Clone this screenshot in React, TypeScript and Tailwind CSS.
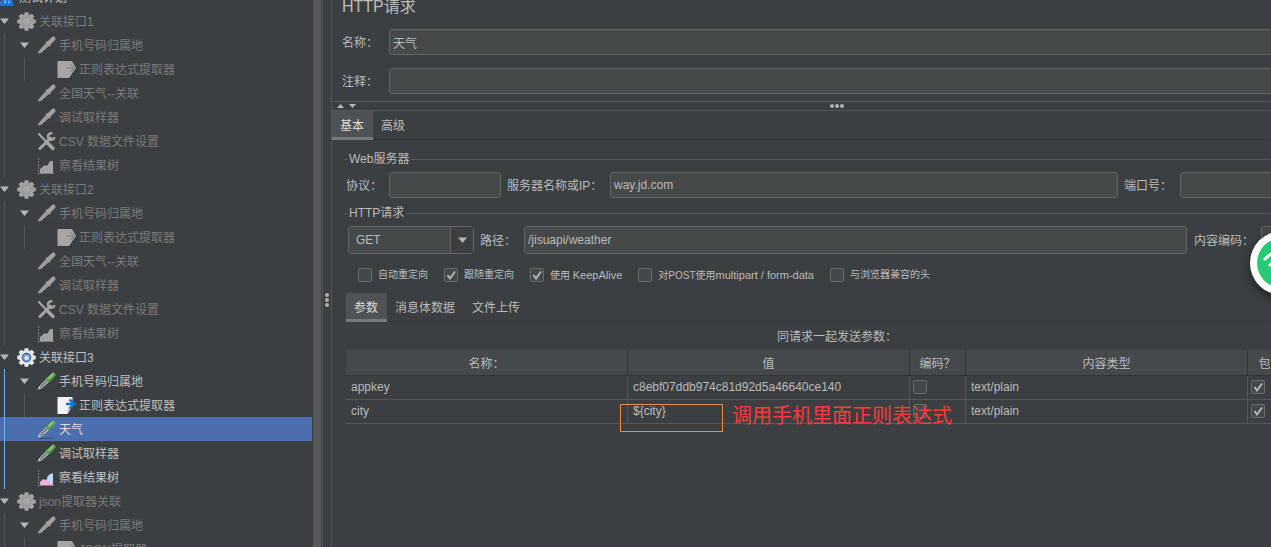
import React, { useState } from "react";

type IconKind = "plan" | "gear" | "dropper" | "extract" | "tools" | "chart";

interface TreeNode {
  id: number;
  label: string;
  icon: IconKind;
  level: number;
  open?: boolean;
  enabled?: boolean;
  activeGroup?: boolean;
}

const nodes: TreeNode[] = [
  { id: 0, label: "测试计划", icon: "plan", level: -1, enabled: true },
  { id: 1, label: "关联接口1", icon: "gear", level: 0, open: true },
  { id: 2, label: "手机号码归属地", icon: "dropper", level: 1, open: true },
  { id: 3, label: "正则表达式提取器", icon: "extract", level: 2 },
  { id: 4, label: "全国天气--关联", icon: "dropper", level: 1 },
  { id: 5, label: "调试取样器", icon: "dropper", level: 1 },
  { id: 6, label: "CSV 数据文件设置", icon: "tools", level: 1 },
  { id: 7, label: "察看结果树", icon: "chart", level: 1 },
  { id: 8, label: "关联接口2", icon: "gear", level: 0, open: true },
  { id: 9, label: "手机号码归属地", icon: "dropper", level: 1, open: true },
  { id: 10, label: "正则表达式提取器", icon: "extract", level: 2 },
  { id: 11, label: "全国天气--关联", icon: "dropper", level: 1 },
  { id: 12, label: "调试取样器", icon: "dropper", level: 1 },
  { id: 13, label: "CSV 数据文件设置", icon: "tools", level: 1 },
  { id: 14, label: "察看结果树", icon: "chart", level: 1 },
  { id: 15, label: "关联接口3", icon: "gear", level: 0, open: true, enabled: true },
  { id: 16, label: "手机号码归属地", icon: "dropper", level: 1, open: true, enabled: true, activeGroup: true },
  { id: 17, label: "正则表达式提取器", icon: "extract", level: 2, enabled: true, activeGroup: true },
  { id: 18, label: "天气", icon: "dropper", level: 1, enabled: true, activeGroup: true },
  { id: 19, label: "调试取样器", icon: "dropper", level: 1, enabled: true, activeGroup: true },
  { id: 20, label: "察看结果树", icon: "chart", level: 1, enabled: true, activeGroup: true },
  { id: 21, label: "json提取器关联", icon: "gear", level: 0, open: true },
  { id: 22, label: "手机号码归属地", icon: "dropper", level: 1, open: true },
  { id: 23, label: "JSON提取器", icon: "extract", level: 2 },
];

const teeth = [0, 45, 90, 135, 180, 225, 270, 315];

function NodeIcon({ kind, on }: { kind: IconKind; on: boolean }) {
  return (
    <svg viewBox="0 0 19 19" className="h-[19px] w-[19px] shrink-0" aria-hidden="true">
      {kind === "plan" && (
        <>
          <path d="M7 0h5v7l4 8q1 3-2 3H5q-3 0-2-3l4-8z" fill="#a9cdf4" />
          <path d="M6 9h7l3 6q1 3-2 3H5q-3 0-2-3z" fill="#1673e0" />
          <path d="M8.500 10l-1.500 5h2zM12 12l1 3h-2z" fill="#b5dbff" />
        </>
      )}
      {kind === "gear" && (
        <>
          {teeth.map((a) => (
            <path
              key={a}
              d="M7 3.500L7.700 .2h3.600l.7 3.300z"
              fill={on ? "#e6e8ea" : "#a2a2a2"}
              transform={`rotate(${a} 9.5 9.5)`}
            />
          ))}
          <circle cx="9.500" cy="9.500" r="7.200" fill={on ? "#e6e8ea" : "#a2a2a2"} />
          <circle cx="9.500" cy="9.500" r="4.700" fill={on ? "#315c9c" : "#919191"} />
          <circle cx="9.500" cy="9.500" r="3.600" fill={on ? "#7fa6d6" : "#aaaaaa"} />
          <circle cx="9.500" cy="10" r="2" fill={on ? "#e8eef6" : "#a2a2a2"} />
        </>
      )}
      {kind === "dropper" && (
        <>
          <path d="M2 18.500h14" stroke="#2b2d2e" strokeOpacity=".5" />
          <path d="M.5 17.800L2 14.500l7.500-8 3 3-8 7z" fill={on ? "#c3c6c8" : "#9e9e9e"} />
          {on && <path d="M3.500 15.500l6.500-7" stroke="#5c6163" strokeWidth="1.200" />}
          <path d="M9 5.800l4.200 4.200" stroke={on ? "#3f7a34" : "#9a9a9a"} strokeWidth="2" />
          <path
            d="M11.500 7.500L16.300 2.700"
            stroke={on ? "#64a550" : "#9f9f9f"}
            strokeWidth="4.400"
            strokeLinecap="round"
          />
          {on && <path d="M11.500 6.300l4.300-4.300" stroke="#a5d694" strokeWidth="1.200" />}
        </>
      )}
      {kind === "extract" && (
        <>
          <path d="M2 18.500h13" stroke="#2b2d2e" strokeOpacity=".5" />
          {on ? (
            <>
              <path d="M.5 1h15v9l-5 8H.5z" fill="#f2f3f4" />
              <path d="M15.500 10l-5 8v-5q3-.5 5-3z" fill="#b9bdc0" />
              <path
                d="M9 8h8.500M12.500 3.500L17.500 8l-5 4.500"
                fill="none"
                stroke="#1474d4"
                strokeWidth="2.400"
              />
            </>
          ) : (
            <>
              <path d="M.5 1h14.500L19 8l-7 10H.5z" fill="#a6a6a6" />
              <path
                d="M9.500 8h8M13 4l4.500 4-4.500 4"
                fill="none"
                stroke="#8c8c8c"
                strokeWidth="1.600"
              />
            </>
          )}
        </>
      )}
      {kind === "tools" && (
        <>
          <path d="M2 2l7 7.500" stroke="#a6a6a6" strokeWidth="2" strokeLinecap="round" />
          <path d="M10.500 11l5.500 5.500" stroke="#a6a6a6" strokeWidth="3.400" strokeLinecap="round" />
          <path d="M3 16.500L13.500 6" stroke="#a6a6a6" strokeWidth="3" strokeLinecap="round" />
          <path
            d="M15.500 1.500a3.300 3.300 0 1 0 2 3.500"
            fill="none"
            stroke="#a6a6a6"
            strokeWidth="2.400"
          />
        </>
      )}
      {kind === "chart" && (
        <>
          <path d="M1.500 2v16" fill="none" stroke="#7d8082" strokeDasharray="2 1" />
          <path d="M1 17.500h16" fill="none" stroke="#7d8082" />
          {on ? (
            <>
              <path d="M3 17v-3l3-3 2 1 2-1 3 2 3-2v6z" fill="#f5b0e2" />
              <path d="M10 9q2-3 6-4v9q-2 2-4 0-2-2-2-5z" fill="#b9dcf7" />
            </>
          ) : (
            <path d="M3 17v-4l5-4 2 1 3-5h3v12z" fill="#a3a3a3" />
          )}
        </>
      )}
    </svg>
  );
}

function textColor(n: TreeNode, selected: boolean) {
  if (selected) return "text-[#dddddd]";
  return n.enabled ? "text-[#c0c0c0]" : "text-[#7b7b7b]";
}

function Tree() {
  const [selected, setSelected] = useState(18);
  return (
    <ul className="-mt-[15px] min-w-0 flex-1 overflow-hidden">
      {nodes.map((n) => (
        <li
          key={n.id}
          className={`flex h-6 items-center whitespace-nowrap ${selected === n.id ? "bg-[#4b6eaf]" : ""}`}
        >
          {n.level > 0 && (
            <span className="flex h-6 w-5 shrink-0 pl-1">
              <span className={`w-px ${n.activeGroup ? "bg-[#6db3f2]" : "bg-[#55585a]"}`} />
            </span>
          )}
          {n.level > 1 && (
            <span className="flex h-6 w-5 shrink-0 pl-1">
              <span className="w-px bg-[#55585a]" />
            </span>
          )}
          <span className={`shrink-0 ${n.level < 0 ? "-ml-[3px]" : "w-[17px]"}`}>
            {n.open && (
              <button type="button" aria-label="折叠" className="flex h-6 items-center">
                <svg width="9" height="6" viewBox="0 0 9 6">
                  <path d="M0 0.500h9L4.500 6z" fill="#b5b7b8" />
                </svg>
              </button>
            )}
          </span>
          <button
            type="button"
            onClick={() => setSelected(n.id)}
            className={`flex items-center gap-[3px] ${textColor(n, selected === n.id)}`}
          >
            <NodeIcon kind={n.icon} on={!!n.enabled} />
            <span className="pt-[2px]">{n.label}</span>
          </button>
        </li>
      ))}
    </ul>
  );
}

const field = "h-[26px] min-w-0 rounded-[3px] border border-[#646666] bg-[#45494a] px-[3px] outline-none";

function Check({ label, checked }: { label: string; checked?: boolean }) {
  return (
    <span className="relative flex h-[14px] w-[14px] shrink-0">
      <input
        type="checkbox"
        aria-label={label}
        defaultChecked={checked}
        className="peer h-[14px] w-[14px] appearance-none rounded-[2px] border border-[#6b6b6b] bg-[#43494a]"
      />
      <svg
        viewBox="0 0 14 14"
        className="pointer-events-none absolute inset-0 hidden h-[14px] w-[14px] peer-checked:block"
      >
        <path d="M3.500 7l2.500 3.500L11 3.500" fill="none" stroke="#b4b4b4" strokeWidth="2" />
      </svg>
    </span>
  );
}

function Tabs({ items }: { items: string[] }) {
  const [active, setActive] = useState(0);
  return (
    <div role="tablist" className="flex h-[29px] border-b border-[#323536]">
      {items.map((t, i) => (
        <button
          key={t}
          type="button"
          role="tab"
          aria-selected={active === i}
          onClick={() => setActive(i)}
          className={`h-[29px] border-b-3 pl-2 pr-[9px] pt-[3px] ${
            active === i ? "border-[#747a80] bg-[#4e5254] text-[#dddddd]" : "border-transparent"
          }`}
        >
          {t}
        </button>
      ))}
    </div>
  );
}

function SectionTitle({ children }: { children: React.ReactNode }) {
  return (
    <h2 className="flex h-4 items-center gap-[2px]">
      <span className="h-px w-[3px] bg-[#555859]" />
      {children}
      <span className="h-px flex-1 bg-[#555859]" />
    </h2>
  );
}

const options = [
  { text: "自动重定向", latin: "", checked: false },
  { text: "跟随重定向", latin: "", checked: true },
  { text: "使用 ", latin: "KeepAlive", checked: true },
  { text: "对POST使用", latin: "multipart / form-data", checked: false },
  { text: "与浏览器兼容的头", latin: "", checked: false },
];

const params = [
  { name: "appkey", value: "c8ebf07ddb974c81d92d5a46640ce140", type: "text/plain" },
  { name: "city", value: "${city}", type: "text/plain" },
];

function ParamTable() {
  const td = "border-r border-b border-[#53575a] px-[5px] pb-[2px]";
  return (
    <table className="w-full table-fixed border-separate border-spacing-0">
      <colgroup>
        <col />
        <col />
        <col className="w-14" />
        <col />
        <col className="w-[82px]" />
      </colgroup>
      <thead>
        <tr className="h-[26px] bg-[#45494b]">
          {["名称：", "值", "编码？", "内容类型", "包含等于？"].map((h) => (
            <th key={h} className="border-r border-b border-[#313435] pt-[2px] font-normal">
              {h}
            </th>
          ))}
        </tr>
      </thead>
      <tbody>
        {params.map((p) => (
          <tr key={p.name} className="h-6">
            <td className={td}>{p.name}</td>
            <td className={`${td} relative`}>
              {p.value}
              {p.name === "city" && (
                <>
                  <span className="absolute -left-2 top-1 h-7 w-[103px] border border-[#f08a3c]" />
                  <span className="absolute left-[104px] top-0 z-10 whitespace-nowrap text-[20px] leading-8 text-[#fb3a3a]">
                    调用手机里面正则表达式
                  </span>
                </>
              )}
            </td>
            <td className="border-r border-b border-[#53575a] px-[3px] pb-[2px]">
              <Check label={`${p.name} 编码`} />
            </td>
            <td className={td}>{p.type}</td>
            <td className="border-r border-b border-[#53575a] px-[3px] pb-[2px]">
              <Check label={`${p.name} 包含等于`} checked />
            </td>
          </tr>
        ))}
      </tbody>
    </table>
  );
}

function RequestPanel() {
  return (
    <main className="-mr-[71px] min-w-0 flex-1 border-l border-[#55585a]">
      <header className="px-[10px]">
        <h1 className="-mt-[5px] h-[23px] text-[16px] leading-6">HTTP请求</h1>
        <div className="mt-[11px] flex items-center">
          <label htmlFor="name" className="w-[47px] pt-[2px]">名称：</label>
          <input id="name" defaultValue="天气" className={`${field} flex-1`} />
        </div>
        <div className="mt-[13px] flex items-center">
          <label htmlFor="comment" className="w-[47px] pt-[2px]">注释：</label>
          <input id="comment" className={`${field} flex-1`} />
        </div>
      </header>

      <div className="mt-[7px] flex h-[10px] items-center border-y border-[#55585a] pl-[5px]">
        <svg width="20" height="6" viewBox="0 0 20 6">
          <path d="M0 5h7L3.500 1zM12 1h7l-3.500 4z" fill="#b5b7b8" />
        </svg>
        <div className="flex flex-1 justify-center gap-[1px] pr-[25px]">
          {[0, 1, 2].map((i) => (
            <span key={i} className="h-1 w-1 rounded-full bg-[#b0b2b3]" />
          ))}
        </div>
      </div>

      <Tabs items={["基本", "高级"]} />

      <div className="px-3 pt-[11px]">
        <SectionTitle>Web服务器</SectionTitle>
        <div className="mt-[5px] flex items-center whitespace-nowrap pl-[2px]">
          <label htmlFor="protocol" className="w-[43px] pt-[2px]">协议：</label>
          <input id="protocol" className={`${field} w-28`} />
          <label htmlFor="server" className="ml-1.5 w-[103px] pt-[2px]">服务器名称或IP：</label>
          <input id="server" defaultValue="way.jd.com" className={`${field} flex-1`} />
          <label htmlFor="port" className="ml-1.5 w-14 pt-[2px]">端口号：</label>
          <input id="port" className={`${field} w-[150px]`} />
        </div>
        <div className="mt-[7px]">
          <SectionTitle>HTTP请求</SectionTitle>
        </div>
        <div className="mt-[5px] flex items-center whitespace-nowrap pl-1">
          <div className="relative flex h-7 w-[126px]">
            <select
              aria-label="请求方法"
              className="h-7 w-full appearance-none rounded-[3px] border border-[#646666] bg-[#45494a] pl-[7px] outline-none"
            >
              <option>GET</option>
              <option>POST</option>
            </select>
            <span className="pointer-events-none absolute inset-y-px right-px flex w-[23px] items-center justify-center border-l border-[#646666] bg-[#3c3f41]">
              <svg width="9" height="6" viewBox="0 0 9 6">
                <path d="M0 0.500h9L4.500 6z" fill="#b5b7b8" />
              </svg>
            </span>
          </div>
          <label htmlFor="path" className="ml-1.5 w-11 pt-[2px]">路径：</label>
          <input
            id="path"
            defaultValue="/jisuapi/weather"
            className="h-7 min-w-0 flex-1 rounded-[3px] border border-[#646666] bg-[#45494a] px-[3px] outline-none"
          />
          <label htmlFor="encoding" className="ml-[7px] w-[67px] pt-[2px]">内容编码：</label>
          <input
            id="encoding"
            className="h-7 w-[69px] rounded-[3px] border border-[#646666] bg-[#45494a] px-[3px] outline-none"
          />
        </div>

        <div className="mt-[14px] flex h-[14px] items-center gap-4 whitespace-nowrap pl-[14px] text-[10px] leading-[14px]">
          {options.map((o) => (
            <label key={o.text} className="flex items-center gap-1.5">
              <Check label={o.text + o.latin} checked={o.checked} />
              <span>
                {o.text}
                {o.latin && <span className="text-[11px] leading-[14px]">{o.latin}</span>}
              </span>
            </label>
          ))}
        </div>

        <div className="mt-[11px] pl-[2px]">
          <Tabs items={["参数", "消息体数据", "文件上传"]} />
          <p className="mt-1.5 h-[22px] pr-[2px] pt-[1px] text-center leading-[17px]">
            同请求一起发送参数：
          </p>
          <ParamTable />
        </div>
      </div>
    </main>
  );
}

export default function App() {
  return (
    <div className="relative flex h-screen overflow-hidden bg-[#3c3f41] font-['Liberation_Sans','Noto_Sans_CJK_SC',sans-serif] text-[12px] leading-4 text-[#bbbbbb]">
      <aside className="flex w-[323px] shrink-0 border-r border-[#55585a]">
        <Tree />
        <div className="ml-px mr-px w-2 bg-[#58595a]" />
      </aside>
      <div className="flex w-2 shrink-0 flex-col items-center justify-center gap-[1px] pt-[53px]">
        {[0, 1, 2].map((i) => (
          <span key={i} className="h-1 w-1 rounded-full bg-[#b0b2b3]" />
        ))}
      </div>
      <RequestPanel />
      <div className="absolute -right-[43px] top-[231px] flex h-16 w-16 items-center justify-center rounded-full bg-white shadow-[0_4px_10px_rgba(0,0,0,0.5)]">
        <svg viewBox="0 0 50 50" className="h-[50px] w-[50px]">
          <circle cx="25" cy="25" r="25" fill="#26ca75" />
          <path
            d="M8 21q17-17 34 0M13 27q12-12 24 0"
            fill="none"
            stroke="#fff"
            strokeWidth="3"
            strokeLinecap="round"
          />
        </svg>
      </div>
    </div>
  );
}
